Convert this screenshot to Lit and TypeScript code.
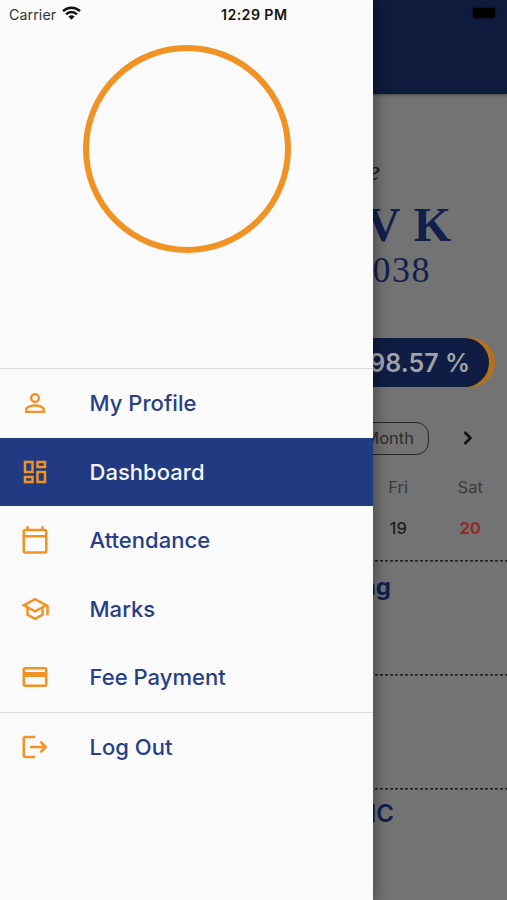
import { LitElement, html, css, svg } from "lit";
import { customElement, property } from "lit/decorators.js";

const icons: Record<string, string> = {
  person: "M12 5.9a2.1 2.1 0 1 1 0 4.2 2.1 2.1 0 0 1 0-4.2m0 9c2.97 0 6.1 1.46 6.1 2.1v1.1H5.9V17c0-.64 3.13-2.1 6.1-2.1M12 4C9.79 4 8 5.79 8 8s1.79 4 4 4 4-1.79 4-4-1.79-4-4-4zm0 9c-2.67 0-8 1.34-8 4v3h16v-3c0-2.66-5.33-4-8-4z",
  dashboard: "M19 5v2h-4V5h4M9 5v6H5V5h4m10 8v6h-4v-6h4M9 17v2H5v-2h4M21 3h-8v6h8V3zM11 3H3v10h8V3zm10 8h-8v10h8V11zm-10 4H3v6h8v-6z",
  calendar: "M20 3h-1V1h-2v2H7V1H5v2H4c-1.1 0-2 .9-2 2v16c0 1.1.9 2 2 2h16c1.1 0 2-.9 2-2V5c0-1.1-.9-2-2-2zm0 18H4V10h16v11zm0-13H4V5h16v3z",
  school: "M12 3L1 9l4 2.18v6L12 21l7-3.82v-6l2-1.09V17h2V9L12 3zm6.82 6L12 12.72 5.18 9 12 5.28 18.82 9zM17 15.99l-5 2.73-5-2.73v-3.72L12 15l5-2.73v3.72z",
  card: "M20 4H4c-1.11 0-1.99.89-1.99 2L2 18c0 1.11.89 2 2 2h16c1.11 0 2-.89 2-2V6c0-1.11-.89-2-2-2zm0 14H4v-6h16v6zm0-10H4V6h16v2z",
  logout: "M17 7l-1.41 1.41L18.17 11H8v2h10.17l-2.58 2.58L17 17l5-5zM4 5h8V3H4c-1.1 0-2 .9-2 2v14c0 1.1.9 2 2 2h8v-2H4V5z",
};

@customElement("menu-item")
class MenuItem extends LitElement {
  @property() icon = "";
  @property() label = "";
  @property({ type: Boolean, reflect: true }) active = false;
  static styles = css`
    :host { display: flex; align-items: center; height: 68.5px; padding-left: 20px; gap: 39.5px; color: #263f88; }
    :host([active]) { background: #213a82; color: #f4f6fb; }
    svg { width: 30px; height: 30px; fill: #f19224; flex: none; }
    .label { font-size: 22px; font-weight: 500; letter-spacing: 0.03px; white-space: nowrap; }
  `;
  render() {
    return html`<svg viewBox="0 0 24 24">${svg`<path d=${icons[this.icon]} />`}</svg>
      <span class="label">${this.label}</span>`;
  }
}

@customElement("app-drawer")
class AppDrawer extends LitElement {
  static styles = css`
    :host { display: flex; flex-direction: column; background: #fafafa; }
    .status { display: flex; align-items: center; height: 28px; padding-left: 9px; color: #111; font-size: 14.2px; }
    .carrier { width: 53px; color: #333; letter-spacing: 0.1px; }
    .wifi { width: 19px; height: 14px; margin-top: -3px; }
    .time { margin-left: 140px; font-weight: 600; letter-spacing: 0.42px; white-space: nowrap; }
    .profile { height: 340px; display: flex; justify-content: center; align-items: flex-start; padding: 16.5px 0 0 1px; box-sizing: border-box; }
    .avatar { box-sizing: border-box; width: 208px; height: 208px; border: 6px solid #f19224; border-radius: 50%; }
    .group { border-top: 1.5px solid #dcdcdc; }
  `;
  render() {
    return html`
      <div class="status">
        <span class="carrier">Carrier</span>
        <svg class="wifi" viewBox="0 0 19 14">
          <path d="M1 5.2a12.2 12.2 0 0 1 17 0M4 8.3a8 8 0 0 1 11 0" fill="none" stroke="#111" stroke-width="2.5" />
          <path d="M6.4 10.6a4.5 4.5 0 0 1 6.2 0L9.5 13.7z" fill="#111" />
        </svg>
        <span class="time">12:29 PM</span>
      </div>
      <div class="profile"><div class="avatar"></div></div>
      <nav class="group">
        <menu-item icon="person" label="My Profile"></menu-item>
        <menu-item icon="dashboard" label="Dashboard" active></menu-item>
        <menu-item icon="calendar" label="Attendance"></menu-item>
        <menu-item icon="school" label="Marks"></menu-item>
        <menu-item icon="card" label="Fee Payment"></menu-item>
      </nav>
      <nav class="group"><menu-item icon="logout" label="Log Out"></menu-item></nav>
    `;
  }
}

@customElement("app-root")
class AppRoot extends LitElement {
  static styles = css`
    :host { display: block; position: relative; width: 507px; height: 900px; overflow: hidden; background: #737373; font-family: Inter, "Liberation Sans", sans-serif; }
    * { box-sizing: border-box; }
    app-drawer { position: absolute; inset: 0 auto 0 0; width: 372.6px; box-shadow: 0 0 14px 2px rgba(0, 0, 0, 0.4); }
    .page { display: flex; flex-direction: column; align-items: flex-end; white-space: nowrap; }
    .bar { width: 100%; height: 94px; background: #0e1b3c; padding: 8px 12px; display: flex; justify-content: flex-end; box-shadow: 0 1px 3px rgba(0, 0, 0, 0.4); }
    .battery { width: 22px; height: 10px; border-radius: 2px; background: #000; box-shadow: 0 0 2px #000; }
    .greeting { height: 106px; padding: 61px 127px 0 0; font: italic 28px/32px "Liberation Serif", serif; color: #1b1b1b; }
    .name { height: 50px; padding-right: 56px; font: bold 48px/50px "Liberation Serif", serif; word-spacing: 2px; color: #121f4c; }
    .number { height: 88px; padding-right: 76px; font: 36px/40px "Liberation Serif", serif; letter-spacing: 1.5px; color: #121f4c; }
    .score { margin-right: 12.5px; padding-right: 6px; background: #b37119; border-radius: 25px; }
    .score span { display: block; width: 190px; height: 49px; padding-right: 18.5px; border-radius: 25px; background: #0f1c43; color: #a0a4a9; font-size: 25px; font-weight: 600; line-height: 50px; text-align: right; }
    .period { display: flex; align-items: center; margin-top: 35px; height: 33px; padding-right: 32px; gap: 31px; }
    .month { width: 120px; height: 33px; border: 1.5px solid #252525; border-radius: 13px; padding-right: 14px; font-size: 16.5px; line-height: 30px; text-align: right; color: #2d2d2d; }
    .chevron { width: 15px; height: 20px; margin-top: -1px; fill: none; stroke: #111; stroke-width: 2.5; }
    .week { display: grid; grid-template-columns: 72px 72px; grid-template-rows: 40px 42px; align-items: center; text-align: center; height: 105px; padding: 12px 0.8px 0 0; font-size: 16.5px; color: #3b3b3b; }
    .date { color: #202020; font-weight: 500; }
    .sat { color: #912c28; font-weight: 700; }
    .class { width: 100%; height: 114px; padding: 12px 116px 0 0; color: #121f4c; font-size: 24px; line-height: 30px; font-weight: 700; text-align: right;
      background: repeating-linear-gradient(90deg, #252525 0 3px, transparent 3px 5px) 0 0 / 100% 1.7px no-repeat; }
    .class.last { padding: 11px 113px 0 0; font-weight: 600; }
  `;
  render() {
    return html`
      <main class="page">
        <header class="bar"><div class="battery"></div></header>
        <div class="greeting">e</div>
        <div class="name">V K</div>
        <div class="number">038</div>
        <div class="score"><span>98.57 %</span></div>
        <div class="period">
          <div class="month">Month</div>
          <svg class="chevron" viewBox="0 0 15 20"><path d="M4.5 4l6 6-6 6" /></svg>
        </div>
        <div class="week">
          <span>Fri</span><span>Sat</span>
          <span class="date">19</span><span class="date sat">20</span>
        </div>
        <section class="class">ng</section>
        <section class="class"></section>
        <section class="class last">IC</section>
      </main>
      <app-drawer></app-drawer>
    `;
  }
}
